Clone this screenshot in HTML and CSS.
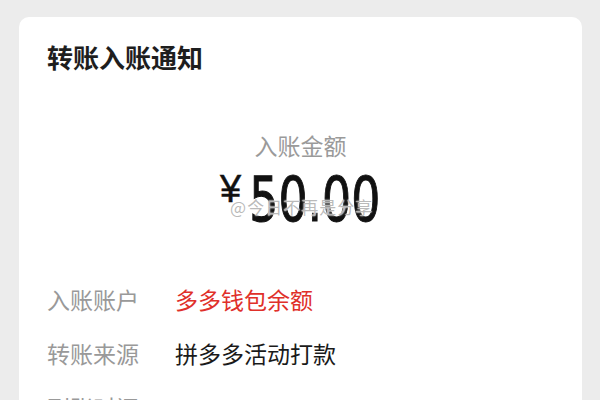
FILE: index.html
```html
<!DOCTYPE html>
<html lang="zh-CN">
<head>
    <meta charset="UTF-8">
    <meta name="viewport" content="width=device-width, initial-scale=1.0">
    <title>转账入账通知</title>
    <link rel="stylesheet" href="styles.css">
</head>
<body>

    <div class="card">
        <h2 class="title">转账入账通知</h2>

        <div class="amount-box">
            <p class="amount-label">入账金额</p>
            <div class="amount">
                <span class="currency">¥</span><span class="value">50.00</span>
                <span class="watermark">@今日不再是分享</span>
            </div>
        </div>

        <div class="info">
            <div class="row">
                <span class="label">入账账户</span>
                <span class="text red">多多钱包余额</span>
            </div>
            <div class="row">
                <span class="label">转账来源</span>
                <span class="text">拼多多活动打款</span>
            </div>
            <div class="row">
                <span class="label">到账时间</span>
                <span class="text">2021-05-18 12:30:45</span>
            </div>
        </div>
    </div>

</body>
</html>
```

FILE: styles.css
```css
body {
    margin: 0;
    background: #ececec;
    font-family: "Noto Sans CJK SC", "Noto Sans", sans-serif;
    overflow: hidden;
}
.card {
    margin: 17px 18px 0 19px;
    background: #fff;
    border-radius: 10px;
    padding: 23px 28px 40px;
    height: 600px;
}
.title {
    margin: 0;
    font-size: 26px;
    line-height: 34px;
    font-weight: bold;
    color: #1e1e1e;
}
.amount-box {
    text-align: center;
    margin-top: 56px;
}
.amount-label {
    margin: 0;
    font-size: 23px;
    line-height: 30px;
    color: #9a9a9a;
}
.amount {
    position: relative;
    display: inline-flex;
    align-items: flex-start;
    margin-top: 9px;
    color: #111;
}
.currency {
    font-family: "Liberation Sans", sans-serif;
    font-size: 38px;
    line-height: 38px;
    margin-top: 1px;
    margin-right: 8px;
    -webkit-text-stroke: 0.5px #111;
}
.value {
    display: inline-block;
    font-family: "DejaVu Sans Condensed", "DejaVu Sans", sans-serif;
    font-size: 62px;
    line-height: 62px;
    transform: scaleX(0.82);
    margin: 0 -14px;
    -webkit-text-stroke: 1px #111;
}
.watermark {
    position: absolute;
    left: 10px;
    top: 25px;
    font-size: 17px;
    letter-spacing: 1px;
    color: rgba(140, 140, 140, 0.6);
    text-shadow: 0 0 2px #fff, 0 0 1px #fff;
    white-space: nowrap;
}
.info {
    margin-top: 53px;
    display: flex;
    flex-direction: column;
    gap: 24px;
}
.row {
    display: flex;
    font-size: 23px;
    line-height: 30px;
}
.label {
    width: 128px;
    color: #999;
}
.text {
    color: #1a1a1a;
}
.red {
    color: #e0302a;
}
```
